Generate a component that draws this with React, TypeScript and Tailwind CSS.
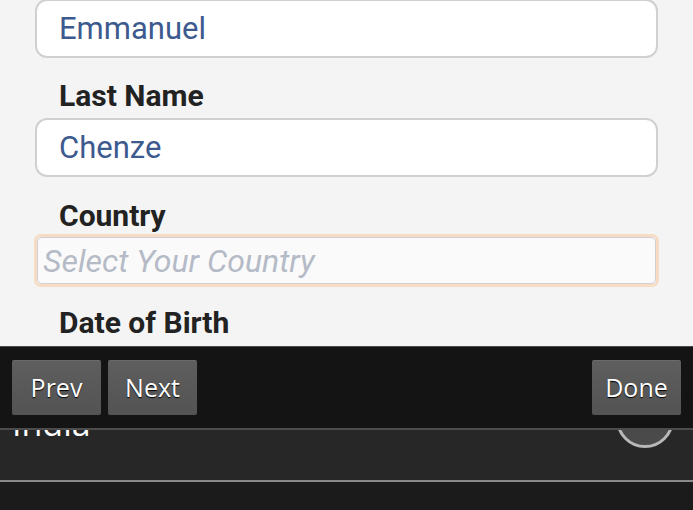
import React from 'react';

const font = { fontFamily: 'Roboto, "Noto Sans", sans-serif' };
const btnFont = { fontFamily: '"Open Sans", "DejaVu Sans", sans-serif' };

function TextField({ value }: { value: string }) {
  return (
    <div className="mx-[35px] h-[59px] rounded-[12px] border-2 border-[#d0d0d0] bg-white flex items-center pl-[22px]">
      <span className="text-[31px] leading-none text-[#3d5a8f]">{value}</span>
    </div>
  );
}

function Label({ children }: { children: React.ReactNode }) {
  return <div className="pl-[59px] text-[30px] font-bold leading-[34px] text-[#222]">{children}</div>;
}

function ToolButton({ children }: { children: React.ReactNode }) {
  return (
    <button
      className="w-[89px] h-[55px] rounded-[2px] bg-gradient-to-b from-[#5e5e5e] to-[#535353] border-t border-[#6a6a6a] text-white text-[25px] [text-shadow:0_1px_1px_#000]"
      style={btnFont}
    >
      {children}
    </button>
  );
}

export default function App() {
  return (
    <div className="w-[693px] h-[510px] overflow-hidden bg-[#f4f4f4] flex flex-col" style={font}>
      <div className="-mt-[1px]">
        <TextField value="Emmanuel" />
      </div>
      <div className="mt-[21px] mb-[5px]">
        <Label>Last Name</Label>
      </div>
      <TextField value="Chenze" />
      <div className="mt-[22px] mb-[1px]">
        <Label>Country</Label>
      </div>
      <div className="mx-[34px] h-[53px] rounded-[7px] border-[3px] border-[#f6dcc2]">
        <div className="h-full rounded-[5px] border border-[#cfcfd4] bg-[#fafafa] flex items-center pl-[5px]">
          <span className="text-[32px] italic leading-none text-[#b5bac7]">Select Your Country</span>
        </div>
      </div>
      <div className="mt-[19px]">
        <Label>Date of Birth</Label>
      </div>

      <div className="mt-[6px] flex-1 bg-[#1b1b1b] flex flex-col border-t border-[#4a4a4a]">
        <div className="h-[81px] bg-[#141414] flex items-center justify-between px-[12px]">
          <div className="flex gap-[7px]">
            <ToolButton>Prev</ToolButton>
            <ToolButton>Next</ToolButton>
          </div>
          <ToolButton>Done</ToolButton>
        </div>
        <div className="h-[54px] bg-[#272727] border-t-2 border-[#4c4c4c] border-b-2 border-b-[#8a8a8a] overflow-hidden flex justify-between px-[12px]">
          <span className="-mt-[27px] text-[34px] leading-[40px] text-white" style={btnFont}>
            India
          </span>
          <div className="-mt-[40px] mr-[7px] w-[58px] h-[58px] rounded-full border-[3px] border-[#b8b8b8] bg-[#4a4a4a]" />
        </div>
      </div>
    </div>
  );
}
